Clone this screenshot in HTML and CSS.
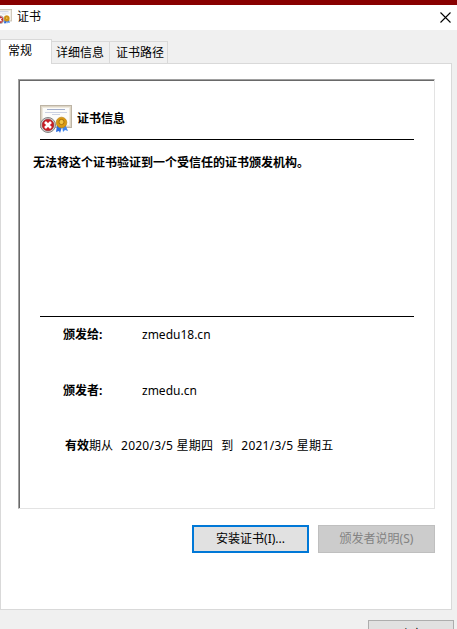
FILE: index.html
```
<!DOCTYPE html>
<html lang="zh-CN">
<head>
  <meta charset="UTF-8">
  <meta name="viewport" content="width=device-width, initial-scale=1.0">
  <title>证书</title>
  <link rel="stylesheet" href="styles.css">
</head>
<body>
  <!-- certificate picture, used in the title bar and in the info box -->
  <svg width="0" height="0" class="defs">
    <symbol id="cert" viewBox="0 0 32 28" preserveAspectRatio="none">
      <rect x=".5" y=".5" width="31" height="22" fill="#ddd5c5" stroke="#bdb4a5"/>
      <rect x="2.5" y="2.5" width="27" height="18" fill="#fcfcfa" stroke="#eee9de"/>
      <path d="M7 4.5h18" stroke="#a3aeca"/>
      <path d="M5 7.5h22M12 9.5h8" stroke="#ccd2e2"/>
      <path d="M17 20l-1 7 3-1 1 2 2-6z" fill="#2c6de0"/>
      <path d="M22 21l1 6 2-2 3 1-3-7z" fill="#3f86ee"/>
      <circle cx="21.5" cy="17.5" r="5.3" fill="#d99a12" stroke="#bd8110" stroke-width=".7"/>
      <circle cx="21.5" cy="17" r="2.6" fill="#f3c544" stroke="#a8700b"/>
      <circle cx="8" cy="20" r="7.5" fill="#d0d0d0" stroke="#858585"/>
      <circle cx="8" cy="20" r="5.8" fill="#c91d24" stroke="#942024" stroke-width=".6"/>
      <path d="M5 17l6 6M11 17l-6 6" stroke="#fff" stroke-width="2.6"/>
    </symbol>
  </svg>

  <div class="titlebar">
    <svg class="title-icon"><use href="#cert"/></svg>
    <span class="title">证书</span>
    <svg class="close" viewBox="0 0 11 11"><path d="M.5.5l10 10M10.5.5l-10 10" stroke="#000" stroke-width="1.1"/></svg>
  </div>

  <div class="tabs">
    <div class="tab active">常规</div>
    <div class="tab details-tab">详细信息</div>
    <div class="tab">证书路径</div>
  </div>

  <div class="panel">
    <div class="info">
      <div class="heading">
        <svg class="cert-icon"><use href="#cert"/></svg>
        <span>证书信息</span>
      </div>
      <div class="message">无法将这个证书验证到一个受信任的证书颁发机构。</div>
      <div class="details">
        <div class="row"><b class="label">颁发给:</b><span class="host">zmedu18.cn</span></div>
        <div class="row"><b class="label">颁发者:</b><span class="issuer">zmedu.cn</span></div>
        <div class="row valid">
          <span class="from"><b>有效</b>期从</span>
          <span class="date">2020/3/5 星期四</span>
          <span class="to">到</span>
          <span class="date">2021/3/5 星期五</span>
        </div>
      </div>
    </div>
    <div class="buttons">
      <button class="btn default">安装证书(I)...</button>
      <button class="btn" disabled>颁发者说明(S)</button>
    </div>
  </div>

  <div class="footer">
    <button class="btn ok">确定</button>
  </div>
</body>
</html>
```
FILE: styles.css
```
* {
  box-sizing: border-box;
}

body {
  margin: 0;
  height: 629px;
  overflow: hidden;
  background: #f0f0f0;
  color: #000;
  font: 12px/16px "Noto Sans", "Noto Sans CJK SC", sans-serif;
}

.defs {
  display: none;
}

.titlebar {
  display: flex;
  height: 30px;
  border-top: 5px solid #880000;
  background: #fff;
}

.title-icon {
  width: 16px;
  height: 15px;
  margin: 4px 0 0 -4px;
}

.title {
  margin: 4px 0 0 5px;
}

.close {
  width: 11px;
  height: 11px;
  margin: 7px 6px 0 auto;
}

.tabs {
  display: flex;
  align-items: flex-end;
  height: 33px;
}

.tab {
  width: 58px;
  height: 22px;
  padding: 3px 0 0 6px;
  border: 1px solid #d9d9d9;
  border-width: 1px 1px 0 0;
  white-space: nowrap;
}

.tab.details-tab {
  padding-left: 4px;
}

.tab.active {
  position: relative;
  width: 52px;
  height: 25px;
  margin-bottom: -1px;
  padding: 3px 0 0 7px;
  border-left-width: 1px;
  background: #fff;
}

.panel {
  width: 452px;
  height: 547px;
  padding: 15px 16px 0 17px;
  border: 1px solid #d9d9d9;
  background: #fff;
}

.info {
  width: 417px;
  height: 430px;
  padding: 24px 20px 0;
  border: 1px solid #e3e3e3;
  border-top-color: #a0a0a0;
  border-left-color: #a0a0a0;
  box-shadow: inset 1px 1px #696969;
}

.heading {
  display: flex;
  height: 36px;
  margin-left: 1px;
  border-bottom: 1px solid #000;
  font-weight: bold;
}

.heading span {
  margin: 7px 0 0 5px;
}

.cert-icon {
  width: 32px;
  height: 28px;
  margin-top: 1px;
}

.message {
  height: 176px;
  margin-left: -6px;
  padding-top: 15px;
  font-weight: bold;
  white-space: nowrap;
}

.details {
  margin-left: 1px;
  padding-top: 10px;
  border-top: 1px solid #000;
}

.row {
  display: flex;
  height: 56px;
  padding-left: 23px;
  white-space: nowrap;
}

.label {
  width: 79px;
}

.row.valid {
  gap: 8px;
  margin-top: -1px;
  padding-left: 25px;
}

.date {
  letter-spacing: .25px;
}

.buttons {
  display: flex;
  justify-content: flex-end;
  gap: 9px;
  margin-top: 16px;
}

.btn {
  width: 117px;
  height: 28px;
  padding: 0;
  border: 1px solid #adadad;
  background: #e1e1e1;
  color: #000;
  font: inherit;
}

.btn.default {
  border: 2px solid #0078d7;
}

.btn:disabled {
  border-color: #bfbfbf;
  background: #ccc;
  color: #838383;
}

.footer {
  display: flex;
  justify-content: flex-end;
  padding: 10px 3px 0 0;
}

.btn.ok {
  width: 86px;
  height: 28px;
  padding-top: 2px;
}
```
